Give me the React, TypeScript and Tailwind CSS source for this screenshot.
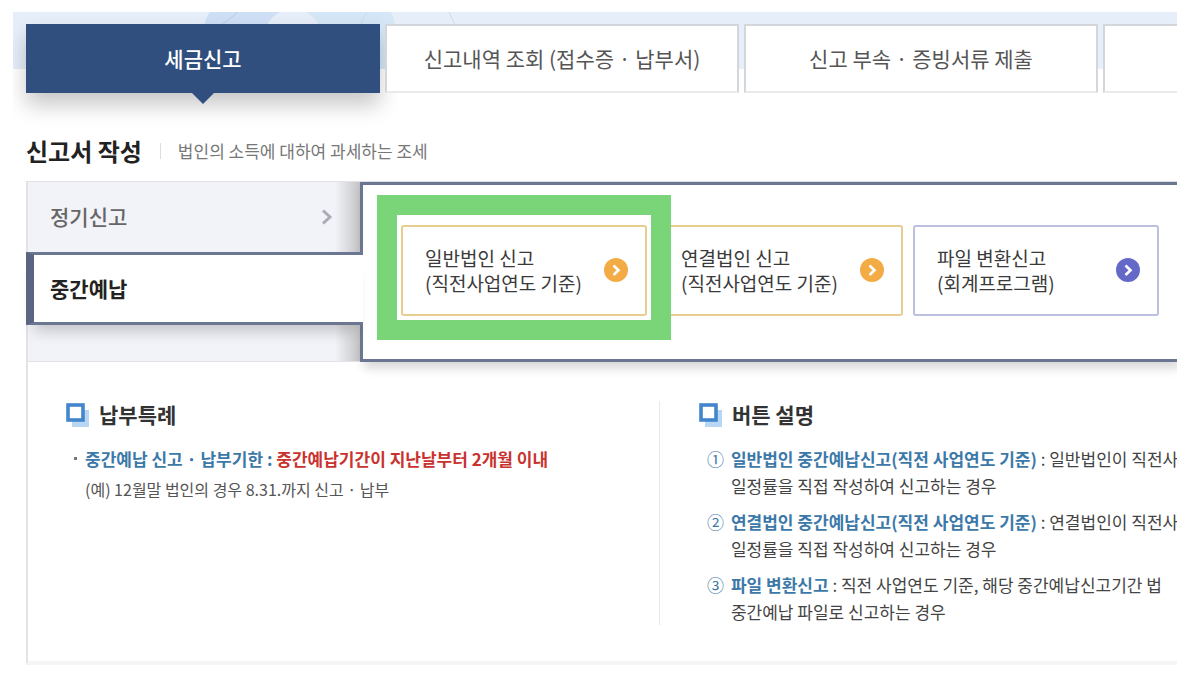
import React, { useState } from 'react';

const tabs = ['세금신고', '신고내역 조회 (접수증 · 납부서)', '신고 부속 · 증빙서류 제출', ''];

const cards = [
  { title: '일반법인 신고', sub: '(직전사업연도 기준)', tone: 'amber', marked: true },
  { title: '연결법인 신고', sub: '(직전사업연도 기준)', tone: 'amber', marked: false },
  { title: '파일 변환신고', sub: '(회계프로그램)', tone: 'indigo', marked: false },
];

const guides = [
  {
    no: '①',
    name: '일반법인 중간예납신고(직전 사업연도 기준)',
    text: ' : 일반법인이 직전사',
    rest: '일정률을 직접 작성하여 신고하는 경우',
  },
  {
    no: '②',
    name: '연결법인 중간예납신고(직전 사업연도 기준)',
    text: ' : 연결법인이 직전사',
    rest: '일정률을 직접 작성하여 신고하는 경우',
  },
  {
    no: '③',
    name: '파일 변환신고',
    text: ' : 직전 사업연도 기준, 해당 중간예납신고기간 법',
    rest: '중간예납 파일로 신고하는 경우',
  },
];

const BannerArt = () => (
  <svg className="absolute left-0 top-0" width="480" height="57" viewBox="13 12 480 57" aria-hidden="true">
    <circle cx="300" cy="57" r="101" fill="#d5e7f7" />
    <path d="M300 -44 A101 101 0 0 0 199 57 L199 69 L300 69 Z" fill="#cfe0f6" />
    <circle cx="293" cy="38" r="29" fill="#e6eef9" />
    <path d="M222 25 L238 12" stroke="#b4cbe8" fill="none" />
    <path d="M361 25 Q362 18 367 12 M449 12 L455 25" stroke="#c8dcf2" fill="none" />
  </svg>
);

const CircleArrow = ({ tone }: { tone: string }) => (
  <svg className="shrink-0" width="24" height="24" viewBox="0 0 24 24" aria-hidden="true">
    <circle cx="12" cy="12" r="12" fill={tone === 'amber' ? '#f3ab45' : '#6469c8'} />
    <path d="M9.5 7.5 L14.5 12.2 L9.5 17" stroke="#fff" strokeWidth="2.6" fill="none" />
  </svg>
);

const SquareHeading = ({ children }: { children: React.ReactNode }) => (
  <h3 className="flex items-center gap-[9px] h-[27px] mb-[17px] text-[21px] font-bold text-[#333]">
    <svg width="24" height="24" viewBox="0 0 24 24" aria-hidden="true">
      <rect x="6" y="7" width="17" height="17" fill="#b9d6f5" />
      <rect x="2" y="2" width="15" height="15" fill="#fff" stroke="#4486cb" strokeWidth="3.6" />
    </svg>
    {children}
  </h3>
);

export default function App() {
  const [activeTab, setActiveTab] = useState(0);

  return (
    <div className="pt-3 pb-4 pl-[13px] pr-[17px] bg-white font-['Noto_Sans_CJK_KR',sans-serif] text-[#333] whitespace-nowrap">
      <div className="overflow-hidden">
        {/* Top tabs over the banner */}
        <header className="relative bg-[linear-gradient(#e6eef9_57px,#fff_57px)] pt-3 pl-[13px]">
          <BannerArt />
          <nav className="relative flex gap-[5px]">
            {tabs.map((tab, i) => (
              <button
                key={i}
                aria-label={tab || '더보기'}
                onClick={() => setActiveTab(i)}
                className={`relative shrink-0 w-[354px] h-[69px] text-[21px] ${
                  i === activeTab
                    ? 'bg-[#304f7e] text-white font-medium shadow-[0_12px_20px_rgba(0,0,0,0.22)]'
                    : 'bg-white text-[#555] border-2 border-[#d3d6db] border-b-[#eaeaea]'
                }`}
              >
                {tab}
                {i === activeTab && (
                  <svg className="absolute left-1/2 top-full -translate-x-1/2" width="22" height="11" viewBox="0 0 22 11" aria-hidden="true">
                    <path d="M0 0 H22 L11 11 Z" fill="#304f7e" />
                  </svg>
                )}
              </button>
            ))}
          </nav>
        </header>

        <main className="pl-[13px]">
          <div className="relative flex items-center h-9 mt-10 mb-3">
            <h2 className="text-[24px] font-bold text-[#222]">신고서 작성</h2>
            <span className="w-px h-4 ml-[18px] mr-[17px] bg-[#ddd]" />
            <p className="text-[17px] text-[#777]">법인의 소득에 대하여 과세하는 조세</p>
          </div>

          <section className="border-t border-l-2 border-[#e2e3e6] border-b-4 border-b-[#f5f5f5]">
            <div className="flex">
              {/* Return types */}
              <div className="flex flex-col shrink-0 w-[332px] bg-[linear-gradient(to_left,#c4c4c6,#f2f3f9_25px)] border-b border-[#e2e3e6]">
                <button className="flex items-center justify-between h-[70px] pl-[22px] pr-[26px] text-[21px] font-medium text-[#666]">
                  정기신고
                  <svg width="14" height="16" viewBox="0 0 14 16" aria-hidden="true">
                    <path d="M3 1.5 L10 8 L3 14.5" stroke="#a9adb8" strokeWidth="3" fill="none" />
                  </svg>
                </button>
                <button className="relative z-10 flex items-center h-[73px] -ml-[2px] -mr-[3px] pl-4 border-y-[3px] border-l-8 border-y-[#6b7690] border-l-[#5a6581] bg-white text-[21px] font-bold text-[#222] shadow-[0_14px_14px_-8px_rgba(0,0,0,0.2)]">
                  중간예납
                </button>
              </div>

              <div className="flex flex-1 gap-[10px] pt-[40px] pb-[43px] pl-[38px] border-[3px] border-r-0 border-[#6b7690] bg-white shadow-[4px_6px_10px_rgba(0,0,0,0.16)]">
                {cards.map((card) => (
                  <div key={card.title} className="relative shrink-0">
                    <button
                      className={`flex items-center justify-between w-[246px] h-[91px] pl-[22px] pr-[17px] pb-[2px] rounded-[3px] border-2 bg-white text-left text-[19px] leading-[25px] text-[#3a3a3a] ${
                        card.tone === 'amber' ? 'border-[#e8cd91]' : 'border-[#bcc0e0]'
                      }`}
                    >
                      <span>
                        {card.title}
                        <br />
                        {card.sub}
                      </span>
                      <CircleArrow tone={card.tone} />
                    </button>
                    {card.marked && (
                      <div className="pointer-events-none absolute z-20 -inset-x-6 -top-[30px] -bottom-6 border-20 border-[#7ad578]" />
                    )}
                  </div>
                ))}
              </div>
            </div>

            {/* Notes */}
            <div className="flex pt-[39px] pb-9">
              <div className="shrink-0 w-[55%] pl-[38px] border-r border-[#e8e8e8]">
                <SquareHeading>납부특례</SquareHeading>
                <ul className="pl-2 text-[17px] leading-[27px]">
                  <li className="flex items-start gap-2 font-bold">
                    <span className="w-[3px] h-[3px] mt-3 bg-[#777]" />
                    <p>
                      <span className="text-[#3c79a8]">중간예납 신고 · 납부기한 : </span>
                      <span className="text-[#c8332f]">중간예납기간이 지난날부터 2개월 이내</span>
                    </p>
                  </li>
                </ul>
                <p className="mt-1 pl-[19px] text-[16px] leading-[27px] text-[#555]">(예) 12월말 법인의 경우 8.31.까지 신고 · 납부</p>
              </div>
              <div className="min-w-0 flex-1 pl-[39px]">
                <SquareHeading>버튼 설명</SquareHeading>
                <ol className="flex flex-col gap-[9px] pl-2 text-[17px] leading-[27px] text-[#444]">
                  {guides.map((g) => (
                    <li key={g.no} className="flex gap-[7px]">
                      <span className="text-[#3c79a8]">{g.no}</span>
                      <p>
                        <b className="text-[#3c79a8]">{g.name}</b>
                        {g.text}
                        <br />
                        {g.rest}
                      </p>
                    </li>
                  ))}
                </ol>
              </div>
            </div>
          </section>
        </main>
      </div>
    </div>
  );
}
